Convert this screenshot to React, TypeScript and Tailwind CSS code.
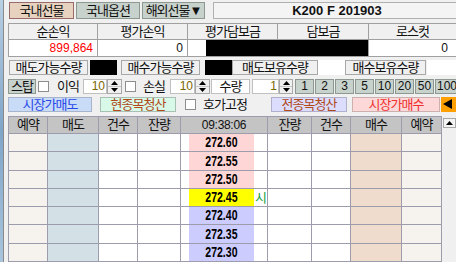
import React from "react";

const KF = "font-['Liberation_Sans','Noto_Sans_CJK_KR',sans-serif]";
const LINE = "border-[#9c9cac]";
const NUM = "text-[12px] tracking-normal";

function Tri({ up }: { up?: boolean }) {
  return (
    <svg width="7" height="4" viewBox="0 0 7 4">
      {up ? <polygon points="0,4 3.5,0 7,4" fill="#000" /> : <polygon points="0,0 3.5,4 7,0" fill="#000" />}
    </svg>
  );
}

function Spin({ w }: { w: string }) {
  return (
    <div className={`${w} h-full flex flex-col border border-[#a8a8a8] bg-[#f0f0f0] flex-none`}>
      <div className="flex-1 flex items-center justify-center border-b border-[#c8c8c8]">
        <Tri up />
      </div>
      <div className="flex-1 flex items-center justify-center">
        <Tri />
      </div>
    </div>
  );
}

function Check({ cls }: { cls: string }) {
  return <span className={`${cls} w-[11px] h-[11px] bg-white border border-[#8e8e8e] flex-none`} />;
}

const rows = [
  { p: "272.60", bg: "bg-[#ffd6d6]", h: "h-[18px]", s: false },
  { p: "272.55", bg: "bg-[#ffd6d6]", h: "h-[19px]", s: false },
  { p: "272.50", bg: "bg-[#ffd6d6]", h: "h-[18px]", s: false },
  { p: "272.45", bg: "bg-[#ffff00]", h: "h-[18px]", s: true },
  { p: "272.40", bg: "bg-[#ccccff]", h: "h-[18px]", s: false },
  { p: "272.35", bg: "bg-[#ccccff]", h: "h-[19px]", s: false },
  { p: "272.30", bg: "bg-[#ccccff]", h: "h-[18px]", s: false },
];

export default function App() {
  return (
    <div className={`w-[456px] h-[262px] overflow-hidden bg-[#f0f0f0] flex text-[13px] tracking-[-1px] text-[#111] leading-none ${KF}`}>
      <div className="w-[3px] h-full flex-none bg-linear-to-b from-[#b9cfe3] via-[#7fa5c9] to-[#a9c5dd]" />
      <div className="w-[1px] h-full flex-none bg-[#8a8a8a]" />
      <div className="w-[460px] flex-none pl-[4px] flex flex-col">
        {/* Row 1: tabs */}
        <div className="mt-[2px] h-[20px] flex">
          <div className="ml-[1px] w-[65px] flex-none border border-[#9a6a6a] bg-[#e6d2be] flex items-center justify-center">국내선물</div>
          <div className="ml-[2px] w-[64px] flex-none border border-[#8c9890] bg-[#c8d2cc] flex items-center justify-center">국내옵션</div>
          <div className="ml-[2px] w-[63px] flex-none border border-[#8c9890] bg-[#c8d2cc] flex items-center justify-center">해외선물▼</div>
          <div className="ml-[8px] w-[248px] flex-none border border-[#b0b0b0] bg-[#f4f4f4] flex items-center justify-center font-bold text-[13px] tracking-normal">K200 F 201903</div>
        </div>

        {/* Row 2-3: info table */}
        <div className="mt-[4px] flex flex-col border-l border-t border-[#a0a0a0] w-[449px]">
          <div className="flex h-[16px] bg-[#f0f0f0]">
            <div className="w-[89px] border-r border-b border-[#a0a0a0] flex items-center justify-center">순손익</div>
            <div className="w-[90px] border-r border-b border-[#a0a0a0] flex items-center justify-center">평가손익</div>
            <div className="w-[90px] border-r border-b border-[#a0a0a0] flex items-center justify-center">평가담보금</div>
            <div className="w-[91px] border-r border-b border-[#a0a0a0] flex items-center justify-center">담보금</div>
            <div className="w-[88px] border-r border-b border-[#a0a0a0] flex items-center justify-center">로스컷</div>
          </div>
          <div className={`flex h-[17px] bg-white ${NUM}`}>
            <div className="w-[89px] border-r border-b border-[#a0a0a0] flex items-center justify-end pr-[4px] text-[#ff0000]">899,864</div>
            <div className="w-[90px] border-r border-b border-[#a0a0a0] flex items-center justify-end pr-[4px]">0</div>
            <div className="w-[181px] border-r border-b border-[#a0a0a0] flex items-stretch">
              <div className="w-[18px]" />
              <div className="flex-1 bg-black" />
            </div>
            <div className="w-[88px] border-r border-b border-[#a0a0a0] flex items-center justify-end pr-[8px]">0</div>
          </div>
        </div>

        {/* Row 4 */}
        <div className="mt-[3px] h-[18px] flex">
          <div className="ml-[1px] w-[79px] flex-none border border-[#a8a8a8] bg-[#f0f0f0] flex items-center justify-center">매도가능수량</div>
          <div className="ml-[2px] w-[27px] flex-none bg-black" />
          <div className="ml-[4px] w-[79px] flex-none border border-[#a8a8a8] bg-[#f0f0f0] flex items-center justify-center">매수가능수량</div>
          <div className="ml-[5px] w-[27px] flex-none bg-black" />
          <div className="w-[86px] flex-none border border-[#a8a8a8] bg-[#f0f0f0] flex items-center justify-center">매도보유수량</div>
          <div className="w-[27px] flex-none bg-white" />
          <div className="w-[81px] flex-none border border-[#a8a8a8] bg-[#f0f0f0] flex items-center justify-center">매수보유수량</div>
          <div className="ml-[1px] w-[34px] flex-none bg-white" />
        </div>

        {/* Row 5 */}
        <div className="mt-[4px] h-[18px] flex items-center">
          <div className="w-[28px] h-full flex-none border border-[#8c9890] bg-[#c8d2cc] flex items-center justify-center">스탑</div>
          <Check cls="ml-[2px]" />
          <div className="ml-[8px] w-[26px] flex-none">이익</div>
          <div className={`w-[24px] h-full flex-none border border-[#c0c0c0] bg-white flex items-center justify-end pr-[1px] text-[#7a6400] ${NUM}`}>10</div>
          <Spin w="w-[15px]" />
          <Check cls="ml-[3px]" />
          <div className="ml-[7px] w-[27px] flex-none">손실</div>
          <div className={`w-[25px] h-full flex-none border border-[#c0c0c0] bg-white flex items-center justify-end pr-[1px] text-[#7a6400] ${NUM}`}>10</div>
          <Spin w="w-[15px]" />
          <div className="ml-[1px] w-[39px] h-full flex-none border border-[#c0c0c0] bg-white flex items-center justify-center">수량</div>
          <div className={`ml-[2px] w-[27px] h-full flex-none border border-[#c0c0c0] bg-white flex items-center justify-end pr-[1px] text-[#7a6400] ${NUM}`}>1</div>
          <Spin w="w-[14px]" />
          {["1", "2", "3", "5", "10", "20", "50"].map((n, i) => (
            <div
              key={n}
              className={`${i === 0 ? "ml-[2px]" : "ml-[1px]"} w-[19px] h-full flex-none border border-[#8c9890] bg-[#c8d2cc] flex items-center justify-center ${NUM}`}
            >
              {n}
            </div>
          ))}
          <div className={`ml-[1px] w-[24px] h-full flex-none border border-[#8c9890] bg-[#c8d2cc] flex items-center justify-start pl-[1px] ${NUM}`}>100</div>
        </div>

        {/* Row 6 */}
        <div className="mt-[3px] h-[18px] flex items-center">
          <div className="w-[84px] h-full flex-none border border-[#a8b4cc] bg-[#c8dcf8] text-[#2848e8] flex items-center justify-center">시장가매도</div>
          <div className="ml-[8px] w-[76px] h-full flex-none border border-[#a8c0b4] bg-[#d8f8e8] text-[#b04818] flex items-center justify-center">현종목청산</div>
          <Check cls="ml-[9px]" />
          <div className="ml-[7px] w-[60px] flex-none">호가고정</div>
          <div className="ml-[8px] w-[76px] h-full flex-none border border-[#b0b0cc] bg-[#dcdcfc] text-[#b04818] flex items-center justify-center">전종목청산</div>
          <div className="ml-[5px] w-[88px] h-full flex-none border border-[#ccb0b0] bg-[#fcd8d8] text-[#f03030] flex items-center justify-center">시장가매수</div>
          <div className="ml-[1px] w-[16px] h-full flex-none bg-[#ffa000] flex items-center justify-start pl-[2px]">
            <svg width="9" height="10" viewBox="0 0 9 10">
              <polygon points="0,5 9,0 9,10" fill="#000" />
            </svg>
          </div>
        </div>

        {/* Table */}
        <div className="mt-[4px] flex">
          <div className={`flex flex-col border-l border-t ${LINE} w-[434px] flex-none`}>
            <div className={`flex h-[17px] bg-[#c4c4c4] border-b ${LINE}`}>
              {[
                ["예약", "w-[39px]"],
                ["매도", "w-[51px]"],
                ["건수", "w-[39px]"],
                ["잔량", "w-[43px]"],
              ].map(([t, w]) => (
                <div key={t + w} className={`${w} border-r ${LINE} flex items-center justify-center`}>{t}</div>
              ))}
              <div className={`w-[87px] border-r ${LINE} flex items-center justify-center text-[12px] tracking-[-0.3px]`}>09:38:06</div>
              {[
                ["잔량", "w-[44px]"],
                ["건수", "w-[39px]"],
                ["매수", "w-[51px]"],
                ["예약", "w-[40px]"],
              ].map(([t, w]) => (
                <div key={t + w + "r"} className={`${w} border-r ${LINE} flex items-center justify-center`}>{t}</div>
              ))}
            </div>
            {rows.map((r) => (
              <div key={r.p} className={`flex ${r.h} border-b ${LINE} flex-none`}>
                <div className={`w-[39px] border-r ${LINE} bg-[#f6f2ee]`} />
                <div className={`w-[51px] border-r ${LINE} bg-[#d3e1e7]`} />
                <div className={`w-[39px] border-r ${LINE} bg-white`} />
                <div className={`w-[43px] border-r ${LINE} bg-white`} />
                <div className={`w-[87px] border-r ${LINE} bg-white flex`}>
                  <div className="w-[8px]" />
                  <div className={`w-[65px] ${r.bg} flex items-center justify-center`}>
                    <span className="inline-block font-bold text-[14px] tracking-normal scale-x-75 text-black">{r.p}</span>
                  </div>
                  <div className="flex-1 flex items-center justify-center text-[#20a040] text-[13px]">{r.s ? "시" : ""}</div>
                </div>
                <div className={`w-[44px] border-r ${LINE} bg-white`} />
                <div className={`w-[39px] border-r ${LINE} bg-white`} />
                <div className={`w-[51px] border-r ${LINE} bg-[#f0dccc]`} />
                <div className={`w-[40px] border-r ${LINE} bg-[#f6f2ee]`} />
              </div>
            ))}
          </div>
          <div className="w-[16px] flex-none bg-[#f0f0f0] flex flex-col">
            <div className="ml-[1px] mt-[2px] w-[13px] h-[10px] border border-[#a8a8a8] bg-[#f4f4f4] flex items-center justify-center">
              <Tri up />
            </div>
          </div>
        </div>
      </div>
    </div>
  );
}
